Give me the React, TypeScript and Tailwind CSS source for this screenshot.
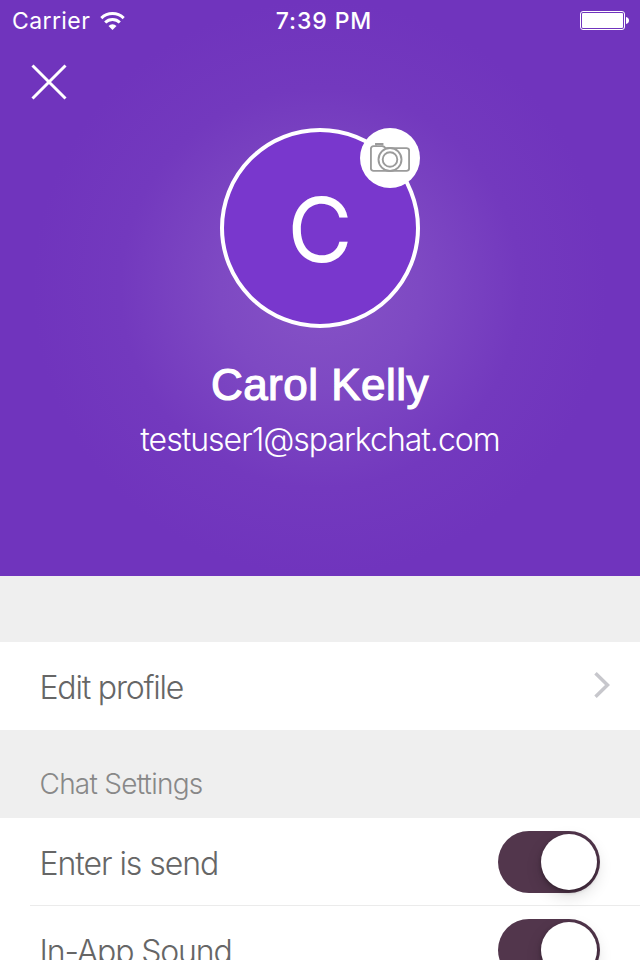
import { useState } from 'react'

type ToggleRow = {
  id: string
  label: string
  tracking: string
}

const chatSettings: ToggleRow[] = [
  { id: 'enter-send', label: 'Enter is send', tracking: 'tracking-[-1.05px]' },
  { id: 'in-app-sound', label: 'In-App Sound', tracking: 'tracking-[-1.15px]' },
]

function WifiIcon() {
  return (
    <svg width="25" height="18" viewBox="0 0 25 18" fill="none" stroke="white" strokeWidth="3">
      <path d="M1.3 6.1a16 16 0 0 1 22.4 0" />
      <path d="M5.2 10.5a10.4 10.4 0 0 1 14.6 0" />
      <path d="M12.5 18l-4-4.1a5.8 5.8 0 0 1 8 0z" fill="white" stroke="none" />
    </svg>
  )
}

function BatteryIcon() {
  return (
    <svg width="50" height="20" viewBox="0 0 50 20" fill="none">
      <rect x="0.5" y="0.5" width="44" height="18" rx="2.5" stroke="white" />
      <rect x="2" y="2" width="41" height="15" rx="1" fill="white" />
      <path d="M46 6c2 .4 3 1.7 3 3.500s-1 3.100-3 3.500z" fill="white" />
    </svg>
  )
}

function CameraIcon() {
  return (
    <svg width="40" height="30" viewBox="0 0 40 30" fill="none" stroke="#9b9b9b" strokeWidth="1.9">
      <path d="M15.5 5.100C14.500 3.700 13.500 3.100 12 3.100H3.500A2.600 2.600 0 0 0 .9 5.700V25.300a2.600 2.600 0 0 0 2.600 2.600H36.500a2.600 2.600 0 0 0 2.600-2.600V7.700a2.600 2.600 0 0 0-2.600-2.600H15.500" />
      <path d="M6 2.500V1h6.500v1.500" />
      <circle cx="20" cy="16.500" r="11.500" />
      <circle cx="20" cy="16.500" r="7.300" />
    </svg>
  )
}

function StatusBar() {
  return (
    <div className="grid h-[42px] grid-cols-3 items-center font-['Inter',sans-serif] text-[23px] leading-10 text-white">
      <div className="flex items-center pl-3">
        <span className="w-[88px] tracking-[0.4px]">Carrier</span>
        <WifiIcon />
      </div>
      <div className="pl-2 text-center font-medium tracking-[0.9px]">7:39 PM</div>
      <div className="flex justify-end pr-[10px]">
        <BatteryIcon />
      </div>
    </div>
  )
}

function Toggle({ checked, onChange }: { checked: boolean; onChange: () => void }) {
  return (
    <button
      type="button"
      role="switch"
      aria-checked={checked}
      onClick={onChange}
      className={`flex h-[62px] w-[102px] items-center rounded-full px-[3px] ${checked ? 'justify-end bg-[#52364c]' : 'bg-[#e5e5e5]'}`}
    >
      <span className="h-14 w-14 rounded-full bg-white shadow-[0_6px_16px_rgba(0,0,0,0.15),0_2px_4px_rgba(0,0,0,0.3)]" />
    </button>
  )
}

export default function App() {
  const [enabled, setEnabled] = useState<Record<string, boolean>>({
    'enter-send': true,
    'in-app-sound': true,
  })

  const toggle = (id: string) => setEnabled(prev => ({ ...prev, [id]: !prev[id] }))

  return (
    <main className="h-screen w-full overflow-hidden bg-white font-['Inter',sans-serif] text-[#666]">
      {/* Profile header */}
      <header className="h-[576px] bg-[radial-gradient(circle_at_50%_50%,#8653c6_0,#7e49c3_100px,#7339be_200px,#7034bd_288px)] text-white">
        <StatusBar />
        <div className="flex h-[86px] pt-[22px] pl-[31px]">
          <button type="button" aria-label="Close" className="h-9 w-9">
            <svg width="36" height="36" viewBox="0 0 36 36" stroke="white" strokeWidth="3">
              <path d="M1.5 1.5l33 33M34.5 1.5L1.5 34.5" />
            </svg>
          </button>
        </div>
        <div className="flex flex-col items-center">
          <div className="relative flex h-[200px] w-[200px] items-center justify-center rounded-full border-4 border-white bg-[#7937cd]">
            <span className="pt-0.5 text-[89px] leading-none">C</span>
            <button
              type="button"
              aria-label="Change photo"
              className="absolute -top-1 -right-1 flex h-[60px] w-[60px] items-center justify-center rounded-full bg-white"
            >
              <CameraIcon />
            </button>
          </div>
          <h1 className="mt-8 font-['Liberation_Sans',sans-serif] text-[44px] leading-[50px] tracking-[0.5px] [-webkit-text-stroke:1.2px_white]">
            Carol Kelly
          </h1>
          <p className="mt-[5px] text-[32px] leading-[50px] font-light tracking-[-1px]">testuser1@sparkchat.com</p>
        </div>
      </header>

      <div className="h-[66px] bg-[#efefef]" />

      <button type="button" className="flex h-[88px] w-full items-center justify-between pr-[30px] pl-[39.5px]">
        <span className="pt-1 text-[32px] font-light tracking-[-1.2px]">Edit profile</span>
        <svg width="16" height="28" viewBox="0 0 16 28" fill="none" stroke="#c7c7cc" strokeWidth="3.5">
          <path d="M1.5 1.3L13.5 13L1.5 24.7" />
        </svg>
      </button>

      {/* Chat settings */}
      <h2 className="flex h-[88px] items-center bg-[#efefef] pt-5 pl-[39.5px] text-[28px] font-light tracking-[-0.75px] text-[#888]">
        Chat Settings
      </h2>
      <ul>
        {chatSettings.map(row => (
          <li key={row.id} className="ml-[30px] flex h-[88px] items-center justify-between border-b border-[#ebebeb] pr-10 pl-[9.5px]">
            <span className={`pt-1 text-[32px] font-light ${row.tracking}`}>{row.label}</span>
            <Toggle checked={enabled[row.id]} onChange={() => toggle(row.id)} />
          </li>
        ))}
      </ul>
    </main>
  )
}
